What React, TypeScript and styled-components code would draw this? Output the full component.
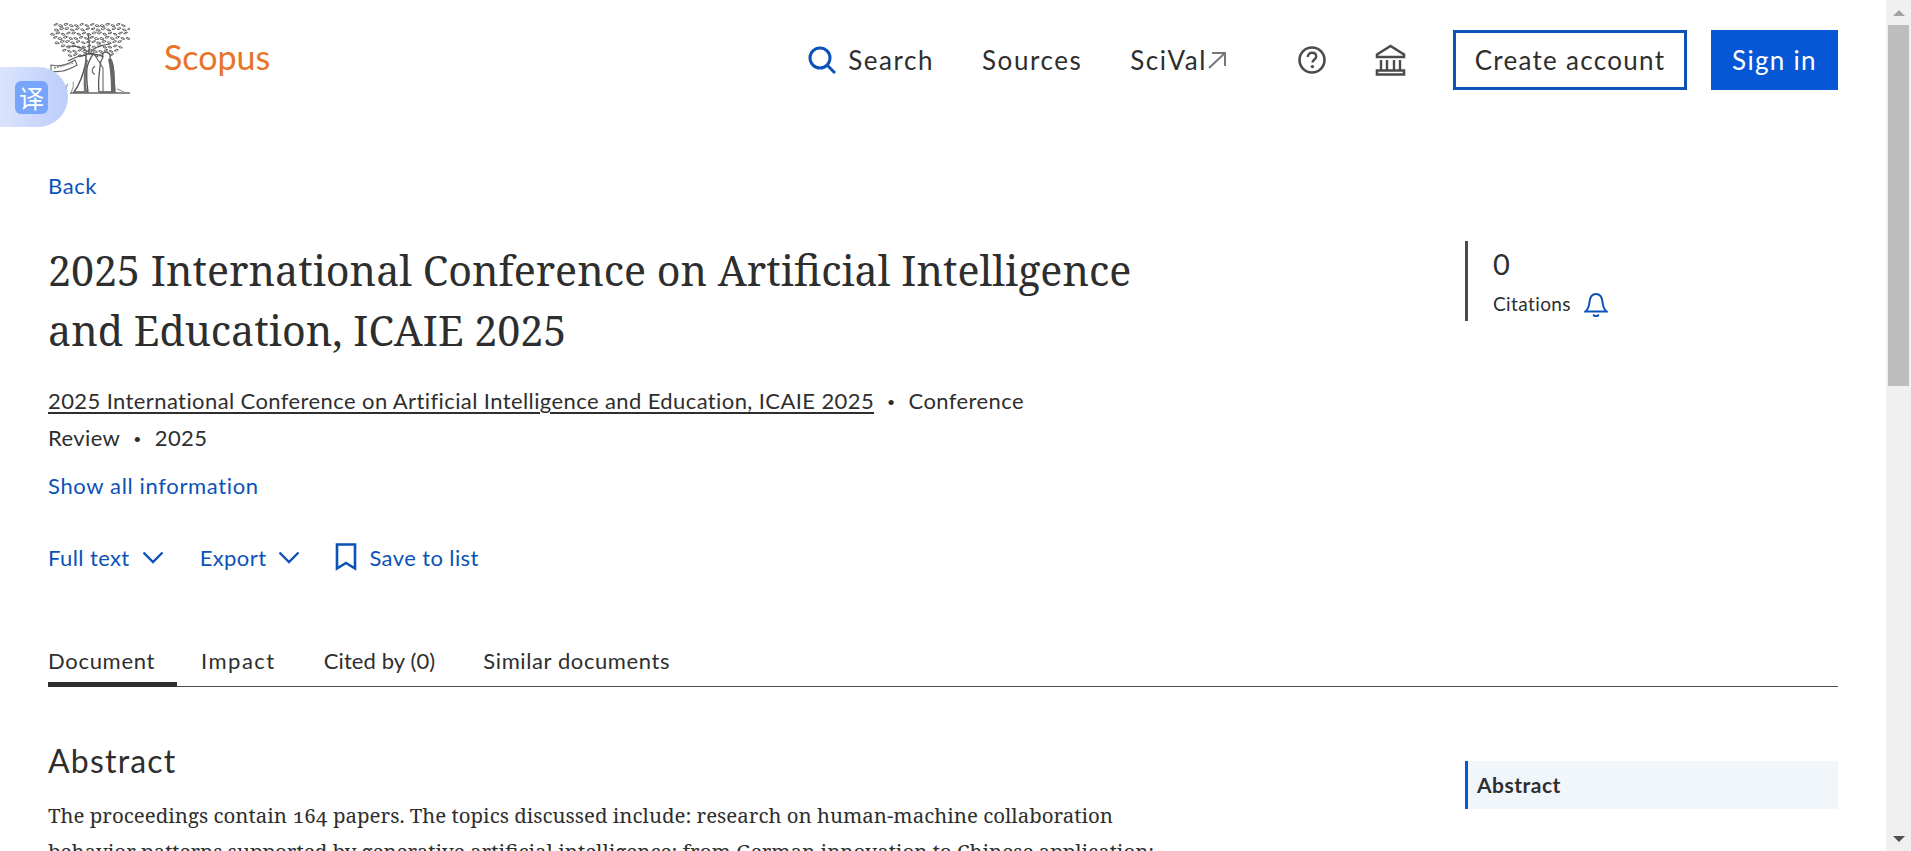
import React from "react";
import styled, { createGlobalStyle } from "styled-components";

const Global = createGlobalStyle`
  html, body { margin: 0; padding: 0; height: 100%; overflow: hidden; background: #fff; }
  * { box-sizing: border-box; }
`;

const SANS = `Lato, "Noto Sans", sans-serif`;
const SERIF = `"Noto Serif", "DejaVu Serif", "Liberation Serif", serif`;
const BLUE = "#0c52b8";

const Frame = styled.div`
  display: flex;
  width: 1911px;
  height: 851px;
  overflow: hidden;
  color: #2e2e2e;
  font-family: ${SANS};
  position: relative;
`;
const Page = styled.div`
  flex: 1;
  min-width: 0;
  height: 851px;
  overflow: hidden;
  padding: 0 48px 0 48px;
`;
const Scrollbar = styled.div`
  width: 25px;
  height: 851px;
  flex: none;
  background: #f0f0f0;
  display: flex;
  flex-direction: column;
  align-items: center;
  padding: 0 2px;
`;
const Arrow = styled.div<{ $down?: boolean }>`
  height: 25px;
  width: 100%;
  flex: none;
  display: flex;
  justify-content: center;
  align-items: center;
  &::before {
    content: "";
    border-left: 6px solid transparent;
    border-right: 6px solid transparent;
    ${(p) => (p.$down ? "border-top: 6px solid #505050;" : "border-bottom: 6px solid #a3a3a3;")}
  }
`;
const Thumb = styled.div`
  width: 100%;
  height: 361px;
  background: #bdbdbd;
  flex: none;
`;
const Spacer = styled.div`
  flex: 1;
`;

const Header = styled.header`
  display: flex;
  align-items: center;
  height: 120px;
`;
const Brand = styled.div`
  display: flex;
  align-items: center;
  gap: 34px;
  height: 120px;
  padding-bottom: 2px;
`;
const LogoMark = styled.svg`
  width: 82px;
  height: 74px;
  flex: none;
  margin-top: -1px;
`;
const ScopusName = styled.span`
  font-size: 34px;
  line-height: 40px;
  color: #e8742a;
  margin-top: -5px;
`;
const Nav = styled.nav`
  margin-left: auto;
  display: flex;
  align-items: center;
`;
const NavItem = styled.a<{ $gap?: number }>`
  display: flex;
  align-items: center;
  gap: 12px;
  font-size: 26px;
  letter-spacing: 1.55px;
  line-height: 60px;
  color: #2e2e2e;
  margin-right: ${(p) => p.$gap ?? 48}px;
`;
const IconSlot = styled.span<{ $gap: number }>`
  display: flex;
  margin-right: ${(p) => p.$gap}px;
`;
const ExternalSlot = styled.span`
  display: flex;
  margin-left: -11px;
`;
const OutlineButton = styled.button`
  width: 234px;
  height: 60px;
  border: 3px solid ${BLUE};
  background: #fff;
  color: #2e2e2e;
  font: 26px ${SANS};
  letter-spacing: 1.3px;
  padding: 0;
  margin-right: 24px;
`;
const SolidButton = styled.button`
  width: 127px;
  height: 60px;
  border: 0;
  background: #0657d6;
  color: #fff;
  font: 26px ${SANS};
  letter-spacing: 1.3px;
  padding: 0;
`;

const Translate = styled.div`
  position: absolute;
  left: 0;
  top: 67px;
  width: 68px;
  height: 60px;
  border-radius: 0 30px 30px 0;
  background: linear-gradient(90deg, #dbe4fd, #bccdfb);
  display: flex;
  align-items: center;
  padding-left: 15px;
`;
const TranslateIcon = styled.div`
  width: 33px;
  height: 33px;
  border-radius: 6px;
  background: #76a5fb;
  color: #fff;
  font: 25px/33px "Noto Sans CJK SC", sans-serif;
  text-align: center;
`;

const Back = styled.a`
  display: block;
  color: ${BLUE};
  font-size: 22px;
  letter-spacing: 0.6px;
  line-height: 28px;
  margin-top: 52px;
`;
const Hero = styled.section`
  display: flex;
  justify-content: space-between;
  margin-top: 40px;
`;
const HeroMain = styled.div`
  width: 1100px;
`;
const Title = styled.h1`
  margin: 0;
  font-family: ${SERIF};
  font-weight: 400;
  font-size: 41.2px;
  line-height: 60px;
  color: #2e2e2e;
`;
const Meta = styled.div`
  margin-top: 23px;
  font-size: 22px;
  letter-spacing: 0.4px;
  line-height: 36px;
`;
const SourceLink = styled.a`
  color: #2e2e2e;
  text-decoration: underline;
  text-underline-offset: 3px;
`;
const Dot = styled.span`
  margin: 0 13px;
  font-size: 14px;
  vertical-align: 2px;
`;
const BlueLink = styled.a`
  display: block;
  color: ${BLUE};
  font-size: 22px;
  letter-spacing: 0.65px;
  line-height: 28px;
  margin-top: 15px;
`;
const Actions = styled.div`
  display: flex;
  align-items: center;
  margin-top: 41px;
  height: 32px;
`;
const Action = styled.a<{ $gap?: number }>`
  display: flex;
  align-items: center;
  gap: 12px;
  color: ${BLUE};
  font-size: 22px;
  letter-spacing: 0.4px;
  margin-right: ${(p) => p.$gap ?? 0}px;
`;
const Metric = styled.aside`
  width: 373px;
  height: 80px;
  margin-top: 1px;
  border-left: 3px solid #4b4b4b;
  padding-left: 25px;
`;
const MetricValue = styled.div`
  font-size: 29px;
  line-height: 46px;
`;
const MetricLabel = styled.div`
  display: flex;
  align-items: center;
  gap: 13px;
  font-size: 19px;
  letter-spacing: 0.4px;
  line-height: 26px;
  margin-top: 4px;
`;

const Tabs = styled.div`
  display: flex;
  margin-top: 70px;
  height: 44px;
  border-bottom: 1px solid #4b4b4b;
`;
const Tab = styled.a<{ $active?: boolean; $spacing?: number }>`
  margin-right: 48px;
  font-size: 22px;
  letter-spacing: ${(p) => p.$spacing ?? 0.7}px;
  line-height: 36px;
  height: 44px;
  color: #2e2e2e;
  ${(p) => (p.$active ? "margin-right: 24px; width: 129px; border-bottom: 5px solid #2e2e2e;" : "")}
`;
const Content = styled.div`
  display: flex;
  justify-content: space-between;
`;
const Article = styled.article`
  width: 1110px;
`;
const SectionTitle = styled.h2`
  margin: 52px 0 0;
  font-size: 32px;
  letter-spacing: 1.2px;
  line-height: 44px;
  font-weight: 400;
`;
const Body = styled.p`
  margin: 14px 0 0;
  font-family: ${SERIF};
  font-size: 20.45px;
  font-variant-numeric: oldstyle-nums;
  line-height: 36px;
  color: #2e2e2e;
`;
const SideNav = styled.div`
  width: 373px;
  height: 48px;
  margin-top: 74px;
  background: #f1f6fb;
  border-left: 3px solid #0657d6;
  padding-left: 9px;
  font-size: 21px;
  letter-spacing: 0.5px;
  font-weight: 700;
  line-height: 48px;
`;

// The leaf clusters of the tree, derived from a small deterministic sequence.
const leaves: string[] = [];
for (let row = 0; row < 8; row++) {
  const y = 3 + row * 4.3;
  const half = 39 - Math.abs(row - 2.5) * (row > 3 ? 3.5 : 1.5);
  for (let x = 41 - half; x < 41 + half; x += 5.2) {
    const seed = (row * 7 + Math.round(x) * 13) % 6;
    const jx = x + (row % 2) * 2.4;
    const dx = 3.2 - seed * 0.9;
    const dy = seed % 2 ? 2.4 : -2.4;
    leaves.push(`M${jx.toFixed(1)} ${y.toFixed(1)}q${dx.toFixed(1)} ${dy} 4 ${(dy / 2).toFixed(1)}q-2 ${-dy} -4 ${(-dy / 2).toFixed(1)}z`);
  }
}

const Logo = () => (
  <LogoMark viewBox="0 0 82 74" fill="none" aria-hidden="true">
    <path d={leaves.join("")} fill="#fff" stroke="#555" strokeWidth="0.9" />
    <path
      d="M42 32C38 26 30 24 20 24M42 32c3-6 10-9 20-10M41 32c0-7 1-12-1-20M40 34c-6-2-12 1-20 5M43 33c5-2 10 0 16 4"
      stroke="#555"
      strokeWidth="1.2"
    />
    <path
      d="M38 32c1 9-2 17-5 25-2 5-4 9-7 13h14c-1-8-2-15-1-24 1-5 3-9 6-14z"
      fill="#fff"
      stroke="#555"
      strokeWidth="1.4"
    />
    <path d="M40 38c-2 10-3 20-1 31h-3c-1-11 0-21 2-31z" fill="#707070" />
    <path d="M3 43c8 2 16 0 24-5l2 5c-8 5-17 8-26 6z" fill="#fff" stroke="#666" strokeWidth="1.1" />
    <path d="M6 46l19-5" stroke="#888" strokeWidth="1.4" strokeDasharray="2 1" />
    <path
      d="M58 30c3 0 5 3 4 6 3 4 4 12 4 19 0 5 1 10 1 15H51c-1-9 0-18 1-25 0-4 1-7 3-10-1-3 0-5 3-5z"
      fill="#fff"
      stroke="#555"
      strokeWidth="1.3"
    />
    <path d="M60 37c2 9 3 21 3 33h4c0-12 0-24-4-33z" fill="#666" />
    <path d="M45 30l10 16M47 44c-4 3-3 8 0 8M55 46v24" stroke="#666" strokeWidth="1.1" />
    <path d="M22 71h60" stroke="#666" strokeWidth="1.5" />
    <path d="M20 62c-2 2-2 5-1 8M25 60c1 4 0 7-2 10M69 67l7 3" stroke="#999" strokeWidth="1.1" />
  </LogoMark>
);

const SearchIcon = () => (
  <svg width="28" height="28" viewBox="0 0 28 28" fill="none" stroke={BLUE} strokeWidth="3" aria-hidden="true">
    <circle cx="12" cy="12" r="10" />
    <path d="M19 19l8 8" />
  </svg>
);
const ExternalIcon = () => (
  <svg width="18" height="17" viewBox="0 0 18 17" fill="none" stroke="#777" strokeWidth="2" aria-hidden="true">
    <path d="M4 1h13v13M17 1L1 16" />
  </svg>
);
const HelpIcon = () => (
  <svg width="28" height="28" viewBox="0 0 28 28" fill="none" aria-hidden="true">
    <circle cx="14" cy="14" r="12.5" stroke="#4b4b4b" strokeWidth="2.6" />
    <path d="M9.800 11c0-2.800 2-4.200 4.300-4.200 2.400 0 4.100 1.500 4.100 3.600 0 3-3.700 3.200-3.700 6.200" stroke="#4b4b4b" strokeWidth="2.4" />
    <circle cx="14.400" cy="20.600" r="1.700" fill="#4b4b4b" />
  </svg>
);
const InstitutionIcon = () => (
  <svg width="31" height="32" viewBox="0 0 31 32" fill="none" stroke="#4b4b4b" strokeWidth="2.6" aria-hidden="true">
    <path d="M2 10.500L15.500 2 29 10.500v2.500H2z" />
    <path d="M6 16v10M12 16v10M19 16v10M25 16v10" strokeWidth="2.4" />
    <path d="M2 26.500h27v4H2z" />
  </svg>
);
const Chevron = () => (
  <svg width="22" height="13" viewBox="0 0 22 13" fill="none" stroke={BLUE} strokeWidth="2.4" aria-hidden="true">
    <path d="M1.500 1.500L11 11l9.500-9.500" />
  </svg>
);
const BookmarkIcon = () => (
  <svg width="22" height="28" viewBox="0 0 22 28" fill="none" stroke={BLUE} strokeWidth="2.6" aria-hidden="true">
    <path d="M2 1.500h18v24l-9-5.500-9 5.500z" />
  </svg>
);
const BellIcon = () => (
  <svg width="24" height="25" viewBox="0 0 24 25" fill="none" stroke={BLUE} strokeWidth="2" aria-hidden="true">
    <path d="M1.500 19.500c3-2.600 3.600-5.500 4-9.500C6 4.500 8 2 12 2s6 2.500 6.500 8c.4 4 1 6.900 4 9.500z" />
    <path d="M9 23l3 1.500 3-1.500" />
  </svg>
);

export default function App() {
  return (
    <Frame>
      <Global />
      <Page>
        <Header>
          <Brand>
            <Logo />
            <ScopusName>Scopus</ScopusName>
          </Brand>
          <Nav>
            <NavItem>
              <SearchIcon />
              Search
            </NavItem>
            <NavItem>Sources</NavItem>
            <NavItem $gap={72}>
              <span>SciVal</span>
              <ExternalSlot>
                <ExternalIcon />
              </ExternalSlot>
            </NavItem>
            <IconSlot $gap={49}>
              <HelpIcon />
            </IconSlot>
            <IconSlot $gap={47}>
              <InstitutionIcon />
            </IconSlot>
            <OutlineButton>Create account</OutlineButton>
            <SolidButton>Sign in</SolidButton>
          </Nav>
        </Header>
        <Back>Back</Back>
        <Hero>
          <HeroMain>
            <Title>
              2025 International Conference on Artificial Intelligence
              <br />
              and Education, ICAIE 2025
            </Title>
            <Meta>
              <SourceLink>2025 International Conference on Artificial Intelligence and Education, ICAIE 2025</SourceLink>
              <Dot>•</Dot>Conference
              <br />
              Review<Dot>•</Dot>2025
            </Meta>
            <BlueLink>Show all information</BlueLink>
            <Actions>
              <Action $gap={36}>
                Full text <Chevron />
              </Action>
              <Action $gap={35}>
                Export <Chevron />
              </Action>
              <Action>
                <BookmarkIcon />
                Save to list
              </Action>
            </Actions>
          </HeroMain>
          <Metric>
            <MetricValue>0</MetricValue>
            <MetricLabel>
              Citations
              <BellIcon />
            </MetricLabel>
          </Metric>
        </Hero>
        <Tabs>
          <Tab $active>Document</Tab>
          <Tab $spacing={1.5}>Impact</Tab>
          <Tab $spacing={0.1}>Cited by (0)</Tab>
          <Tab $spacing={0.6}>Similar documents</Tab>
        </Tabs>
        <Content>
          <Article>
            <SectionTitle>Abstract</SectionTitle>
            <Body>
              The proceedings contain 164 papers. The topics discussed include: research on human-machine collaboration
              behavior patterns supported by generative artificial intelligence; from German innovation to Chinese
              application;
            </Body>
          </Article>
          <SideNav>Abstract</SideNav>
        </Content>
      </Page>
      <Scrollbar>
        <Arrow />
        <Thumb />
        <Spacer />
        <Arrow $down />
      </Scrollbar>
      <Translate>
        <TranslateIcon>译</TranslateIcon>
      </Translate>
    </Frame>
  );
}
